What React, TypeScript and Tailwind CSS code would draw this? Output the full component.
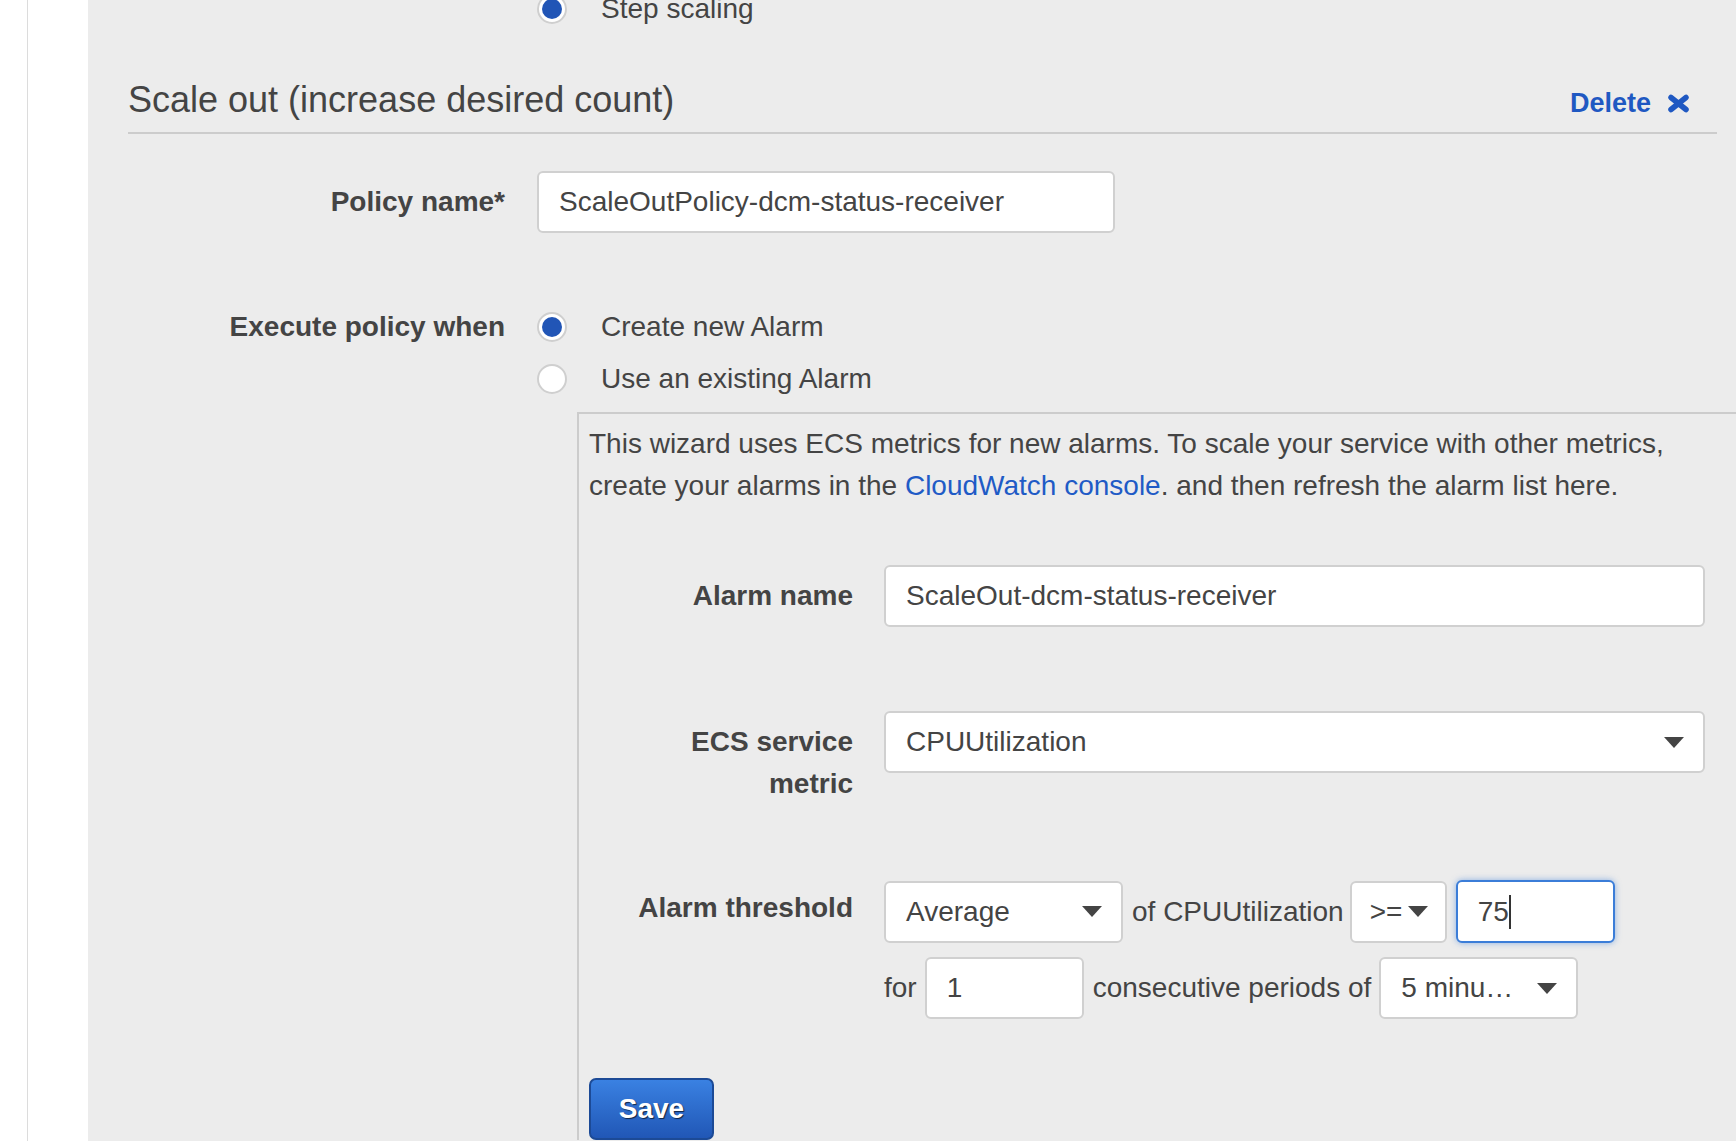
import type { ReactNode } from "react";

function Radio({ checked }: { checked?: boolean }) {
  return (
    <span className="flex h-[30px] w-[30px] shrink-0 items-center justify-center rounded-full border-2 border-[#cfcfcf] bg-white">
      {checked && <span className="h-[20px] w-[20px] rounded-full bg-[#2155b6]" />}
    </span>
  );
}

function Caret() {
  return (
    <svg width="20" height="11" viewBox="0 0 20 11" className="shrink-0">
      <polygon points="0,0 20,0 10,11" fill="#444" />
    </svg>
  );
}

function Select({
  value,
  className,
  caretGap,
}: {
  value: string;
  className: string;
  caretGap?: boolean;
}) {
  return (
    <div
      className={`flex h-[62px] items-center rounded-[6px] border-2 border-[#d0d0d0] bg-white ${
        caretGap ? "gap-[6px] pl-[18px]" : "justify-between pl-[20px] pr-[19px]"
      } ${className}`}
    >
      <span className="whitespace-nowrap">{value}</span>
      <Caret />
    </div>
  );
}

function TextBox({ value, className }: { value: string; className: string }) {
  return (
    <input
      readOnly
      value={value}
      className={`h-[62px] rounded-[6px] border-2 border-[#d0d0d0] bg-white px-[20px] text-[#444] outline-none ${className}`}
    />
  );
}

function Label({ children, className }: { children: ReactNode; className: string }) {
  return <div className={`shrink-0 text-right font-bold ${className}`}>{children}</div>;
}

export default function App() {
  return (
    <div className="flex h-[1141px] w-[1736px] overflow-hidden bg-white font-['Liberation_Sans',Arial,sans-serif] text-[28px] leading-[42px] text-[#444]">
      <div className="w-[28px] shrink-0 border-r border-[#dcdcdc]" />
      <div className="w-[60px] shrink-0" />

      <main className="flex-1 bg-[#ececec] pl-[40px] pr-[19px]">
        {/* scaling type, cut off at the top */}
        <div className="-mt-[12px] ml-[409px] flex h-[42px] items-center gap-[34px]">
          <Radio checked />
          <span>Step scaling</span>
        </div>

        <div className="mt-[50px] flex items-baseline justify-between border-b-2 border-[#cccccc] pb-[12px]">
          <h2 className="text-[36px] leading-[40px]">Scale out (increase desired count)</h2>
          <a className="mr-[27px] flex items-center gap-[16px] text-[27px] font-bold leading-[30px] text-[#1f58c2]">
            Delete
            <svg width="23" height="19" viewBox="0 0 23 19">
              <path
                d="M4 3.5 L19 15.5 M19 3.5 L4 15.5"
                stroke="#1f58c2"
                strokeWidth="5.5"
                strokeLinecap="round"
              />
            </svg>
          </a>
        </div>

        <div className="mt-[37px] flex items-center gap-[32px]">
          <Label className="w-[377px]">Policy name*</Label>
          <TextBox value="ScaleOutPolicy-dcm-status-receiver" className="w-[578px]" />
        </div>

        <div className="mt-[73px] flex gap-[32px]">
          <Label className="w-[377px]">Execute policy when</Label>
          <div className="flex flex-col gap-[10px]">
            <label className="flex h-[42px] items-center gap-[34px]">
              <Radio checked />
              <span>Create new Alarm</span>
            </label>
            <label className="flex h-[42px] items-center gap-[34px]">
              <Radio />
              <span>Use an existing Alarm</span>
            </label>
          </div>
        </div>

        {/* new alarm panel */}
        <div className="-mr-[80px] ml-[449px] mt-[12px] border-l-2 border-t-2 border-[#cccccc] pl-[10px] pt-[9px]">
          <p>
            This wizard uses ECS metrics for new alarms. To scale your service with other metrics,
            <br />
            create your alarms in the <a className="text-[#1f5bc6]">CloudWatch console</a>. and then
            refresh the alarm list here.
          </p>

          <div className="mt-[58px] flex items-center gap-[31px]">
            <Label className="w-[264px]">Alarm name</Label>
            <TextBox value="ScaleOut-dcm-status-receiver" className="w-[821px]" />
          </div>

          <div className="mt-[84px] flex items-start gap-[31px]">
            <Label className="w-[264px] pt-[10px]">
              ECS service
              <br />
              metric
            </Label>
            <Select value="CPUUtilization" className="w-[821px]" />
          </div>

          <div className="mt-[75px] flex items-start gap-[31px]">
            <Label className="w-[264px] pt-[7px]">Alarm threshold</Label>
            <div className="flex flex-col gap-[14px]">
              <div className="flex items-center">
                <Select value="Average" className="w-[239px]" />
                <span className="ml-[9px] whitespace-nowrap">of CPUUtilization</span>
                <Select value=">=" caretGap className="ml-[6px] w-[97px]" />
                <div className="ml-[9px] flex h-[63px] w-[159px] items-center rounded-[6px] border-2 border-[#3b7dd8] bg-white pl-[20px] shadow-[0_0_6px_rgba(59,125,216,0.55)]">
                  <span>75</span>
                  <span className="h-[34px] w-[2px] bg-[#333]" />
                </div>
              </div>
              <div className="flex items-center">
                <span>for</span>
                <TextBox value="1" className="ml-[8px] w-[159px]" />
                <span className="ml-[9px] whitespace-nowrap">consecutive periods of</span>
                <Select value="5 minu…" className="ml-[8px] w-[199px]" />
              </div>
            </div>
          </div>

          <button className="mt-[59px] h-[62px] w-[125px] rounded-[7px] border-2 border-[#1c4a96] bg-linear-to-b from-[#3a81e2] to-[#2157b6] font-bold text-white [text-shadow:1px_1px_1px_rgba(0,0,0,0.65)]">
            Save
          </button>
        </div>
      </main>
    </div>
  );
}
